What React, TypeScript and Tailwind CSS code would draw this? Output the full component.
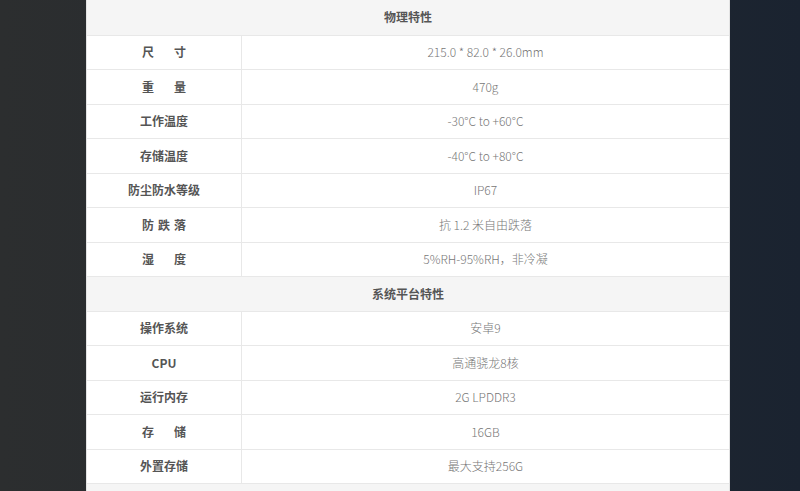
import React from "react";

type Row = { label: React.ReactNode; value: string };

const spaced = (a: string[]) => (
  <span className="inline-flex gap-[20px]">
    {a.map((c, i) => (
      <span key={i}>{c}</span>
    ))}
  </span>
);

const physical: Row[] = [
  { label: spaced(["尺", "寸"]), value: "215.0 * 82.0 * 26.0mm" },
  { label: spaced(["重", "量"]), value: "470g" },
  { label: "工作温度", value: "-30°C to +60°C" },
  { label: "存储温度", value: "-40°C to +80°C" },
  { label: "防尘防水等级", value: "IP67" },
  { label: <span className="inline-flex gap-[4px]"><span>防</span><span>跌</span><span>落</span></span>, value: "抗 1.2 米自由跌落" },
  { label: spaced(["湿", "度"]), value: "5%RH-95%RH，非冷凝" },
];

const system: Row[] = [
  { label: "操作系统", value: "安卓9" },
  { label: "CPU", value: "高通骁龙8核" },
  { label: "运行内存", value: "2G LPDDR3" },
  { label: spaced(["存", "储"]), value: "16GB" },
  { label: "外置存储", value: "最大支持256G" },
];

function Header({ title, first }: { title?: string; first?: boolean }) {
  return (
    <div
      className={`${first ? "h-[35.5px]" : "h-[34.5px]"} flex items-center justify-center bg-[#f5f5f5] border-b border-[#e8e8e8] text-[12px] font-bold text-[#555]`}
    >
      {title}
    </div>
  );
}

function DataRow({ row }: { row: Row }) {
  return (
    <div className="h-[34.5px] grid grid-cols-[155px_1fr] border-b border-[#e8e8e8]">
      <div className="flex items-center justify-center border-r border-[#e8e8e8] text-[12px] font-bold text-[#555]">
        {row.label}
      </div>
      <div className="flex items-center justify-center text-[12px] font-light text-[#777]">
        {row.value}
      </div>
    </div>
  );
}

export default function App() {
  return (
    <div
      className="h-[491px] w-[800px] overflow-hidden bg-gradient-to-r from-[#2c2e2f] via-[#252a30] to-[#1a2330]"
      style={{ fontFamily: '"Noto Sans CJK SC", "Noto Sans", sans-serif' }}
    >
      <div className="ml-[86px] w-[644px] bg-white border-x border-[#e3e3e3]">
        <Header title="物理特性" first />
        {physical.map((r, i) => (
          <DataRow key={i} row={r} />
        ))}
        <Header title="系统平台特性" />
        {system.map((r, i) => (
          <DataRow key={i} row={r} />
        ))}
        <Header />
      </div>
    </div>
  );
}
